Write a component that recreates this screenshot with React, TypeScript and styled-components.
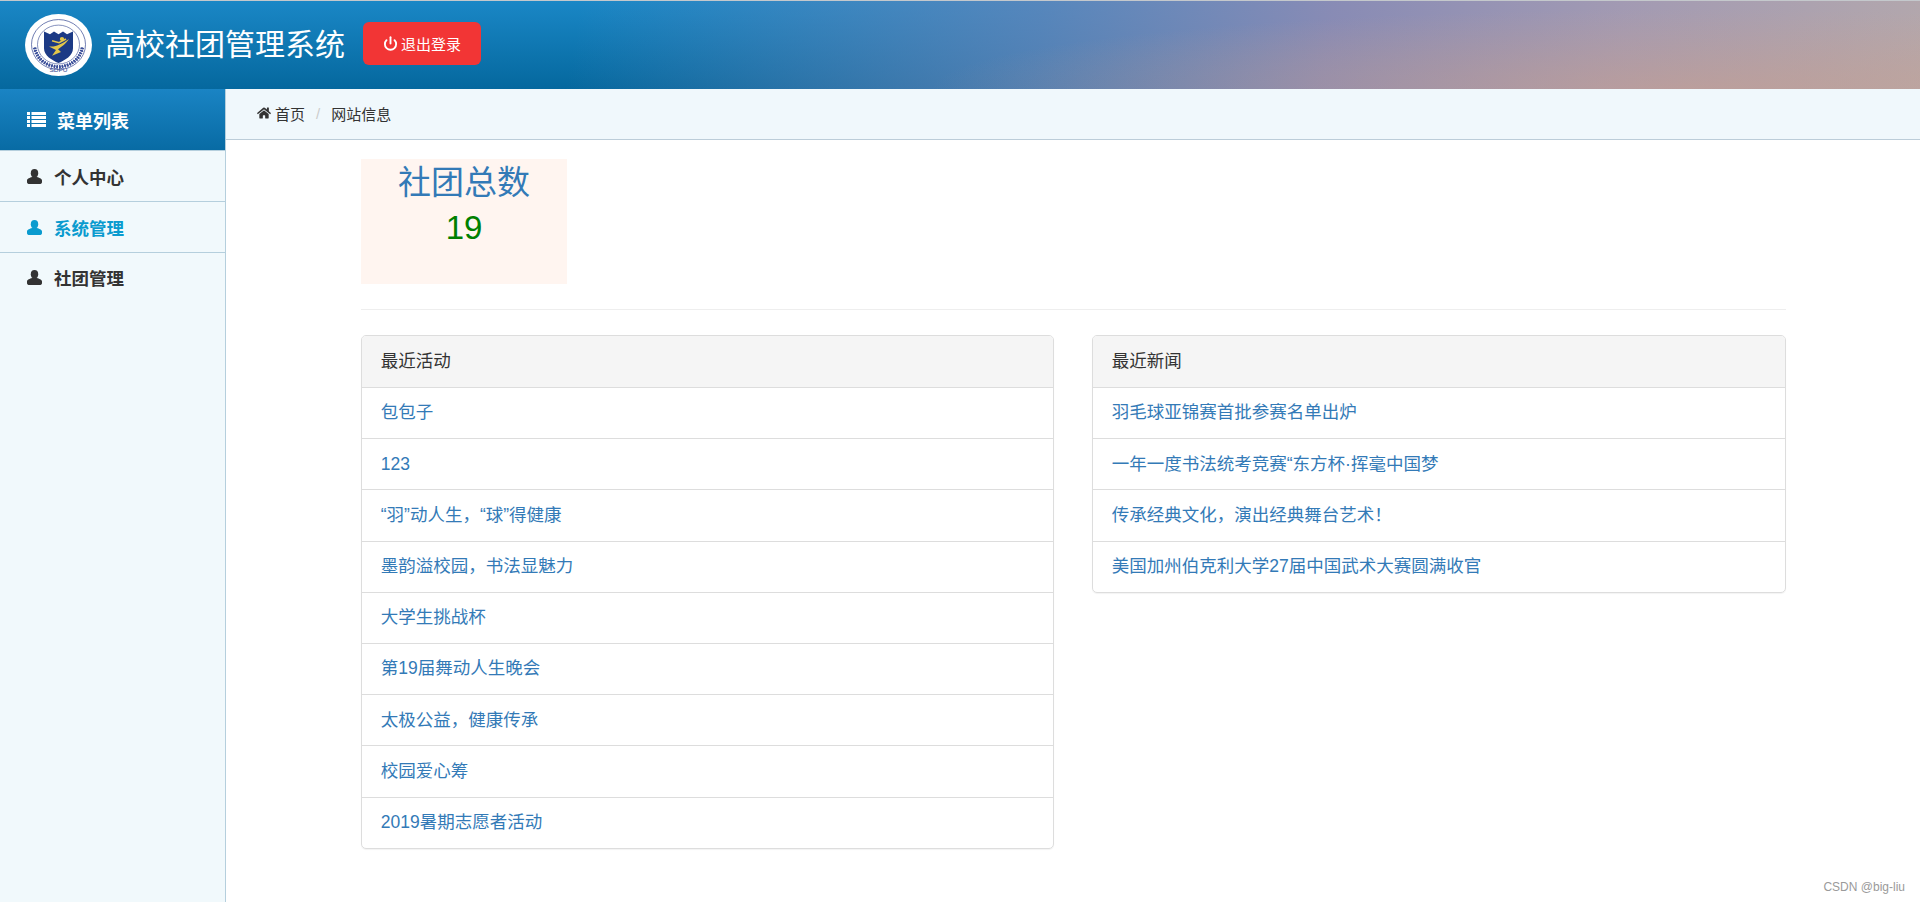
import styled, { createGlobalStyle } from "styled-components"
import { FaHome } from "react-icons/fa"
import { Power } from "lucide-react"

const GlobalStyle = createGlobalStyle`
    html, body {
        margin: 0;
        padding: 0;
        background: #fff;
        font-family: "Liberation Sans", "Noto Sans CJK SC", sans-serif;
        color: #333;
    }
    * {
        box-sizing: border-box;
    }
`

const Page = styled.div`
    height: 902px;
    display: flex;
    flex-direction: column;
    overflow: hidden;
`

const Header = styled.header`
    height: 89px;
    flex: none;
    display: flex;
    align-items: center;
    padding: 0 0 1px 25px;
    border-top: 1px solid #c4c8cc;
    background:
        radial-gradient(ellipse 760px 80px at 88% 100%, rgba(204, 160, 140, 0.55), rgba(204, 160, 140, 0)),
        linear-gradient(100deg, rgba(110, 140, 190, 0) 30%, rgba(110, 135, 185, 0.72) 54%, rgba(145, 140, 180, 0.93) 69%, rgba(168, 155, 178, 0.96) 84%, rgba(182, 168, 172, 0.98) 100%),
        linear-gradient(to bottom, #1a87c6, #05689e);
`

const Logo = styled.svg`
    width: 67px;
    height: 62px;
    flex: none;
    margin-top: 1px;
`

const Title = styled.h1`
    margin: 0 0 0 13px;
    font-size: 30px;
    font-weight: 400;
    line-height: 40px;
    color: #fff;
`

const LogoutButton = styled.button`
    margin: 0 0 2px 18px;
    width: 118px;
    height: 43px;
    display: flex;
    align-items: center;
    justify-content: center;
    gap: 3px;
    padding: 0;
    border: none;
    border-radius: 6px;
    background: #f23535;
    color: #fff;
    font-family: inherit;
    font-size: 15px;
`

const Body = styled.div`
    flex: 1;
    display: flex;
    min-height: 0;
`

const Sidebar = styled.aside`
    width: 226px;
    flex: none;
    background: #f1f9fc;
    border-right: 1px solid #b5cfdd;
`

const SidebarHead = styled.div`
    height: 62px;
    display: flex;
    align-items: center;
    gap: 11px;
    padding-left: 27px;
    background: linear-gradient(to bottom, #1a84c4, #086ba4);
    color: #fff;
    font-size: 18px;
    font-weight: 700;
    border-bottom: 1px solid #b5cfdd;
`

const MenuItem = styled.div<{ $active?: boolean }>`
    height: 51px;
    display: flex;
    align-items: center;
    gap: 12px;
    padding: 0 0 0 27px;
    font-size: 17.5px;
    font-weight: 700;
    color: ${(p) => (p.$active ? "#0a9bcf" : "#333")};
    border-bottom: 1px solid #b5cfdd;

    &:last-child {
        border-bottom: none;
        padding-bottom: 2px;
    }
`

const Main = styled.main`
    flex: 1;
    min-width: 0;
`

const Breadcrumb = styled.div`
    height: 51px;
    display: flex;
    align-items: center;
    padding: 0 0 2px 31px;
    background: #f0f8fc;
    border-bottom: 1px solid #bccdd9;
    font-size: 15px;
`

const Crumb = styled.span`
    display: flex;
    align-items: center;
    gap: 4px;
`

const CrumbDivider = styled.span`
    margin: 0 11px;
    color: #ccc;
`

const Content = styled.div`
    width: 1425px;
    margin: 19px 0 0 135px;
`

const StatBox = styled.div`
    width: 206px;
    height: 125px;
    padding-top: 2px;
    background: #fff5f0;
    text-align: center;
`

const StatTitle = styled.div`
    font-size: 33px;
    line-height: 44px;
    color: #337ab7;
`

const StatValue = styled.div`
    margin-top: 1px;
    font-size: 33px;
    line-height: 44px;
    color: #008000;
`

const Divider = styled.hr`
    margin: 25px 0 25px;
    border: none;
    border-top: 1px solid #eee;
`

const PanelGrid = styled.div`
    display: grid;
    grid-template-columns: 693px 1fr;
    column-gap: 38px;
    align-items: start;
`

const Panel = styled.section`
    border: 1px solid #ddd;
    border-radius: 5px;
    box-shadow: 0 1px 1px rgba(0, 0, 0, 0.05);
    overflow: hidden;
`

const PanelHead = styled.div`
    height: 52px;
    padding: 13px 18.75px;
    background: #f5f5f5;
    border-bottom: 1px solid #ddd;
    font-size: 17.5px;
    line-height: 25px;
`

const PanelRow = styled.a`
    display: block;
    height: 51.2px;
    padding: 12.5px 18.75px;
    border-bottom: 1px solid #ddd;
    font-size: 17.5px;
    line-height: 25px;
    color: #337ab7;
    text-decoration: none;

    &:first-of-type {
        padding-top: 11.5px;
    }

    &:last-child {
        height: 50px;
        border-bottom: none;
    }
`

const Watermark = styled.div`
    position: absolute;
    right: 15px;
    top: 879px;
    font-size: 12px;
    line-height: 16px;
    color: #9a9a9a;
`

const activities = [
    "包包子",
    "123",
    "“羽”动人生\uff0c“球”得健康",
    "墨韵溢校园\uff0c书法显魅力",
    "大学生挑战杯",
    "第19届舞动人生晚会",
    "太极公益\uff0c健康传承",
    "校园爱心筹",
    "2019暑期志愿者活动",
]

const news = [
    "羽毛球亚锦赛首批参赛名单出炉",
    "一年一度书法统考竞赛“东方杯·挥毫中国梦",
    "传承经典文化\uff0c演出经典舞台艺术\uff01",
    "美国加州伯克利大学27届中国武术大赛圆满收官",
]

const menu = ["个人中心", "系统管理", "社团管理"]

const wreathLeaves = Array.from({ length: 26 }, (_, i) => 100 + i * 6.4)

const SchoolLogo = () => (
    <Logo viewBox="0 0 67 67" preserveAspectRatio="none">
        <circle cx="33.5" cy="33.5" r="33.5" fill="#fff" />
        <circle cx="33.5" cy="33" r="27" fill="none" stroke="#2b3f8c" strokeWidth="0.7" />
        <circle cx="33.5" cy="33" r="21" fill="none" stroke="#2b3f8c" strokeWidth="0.6" />
        {wreathLeaves.map((a) => (
            <g key={a}>
                <ellipse cx="33.5" cy="9" rx="0.9" ry="1.8" fill="#3b4f99" transform={`rotate(${a} 33.5 33)`} />
                <ellipse cx="33.5" cy="9" rx="0.9" ry="1.8" fill="#3b4f99" transform={`rotate(${-a} 33.5 33)`} />
            </g>
        ))}
        <path
            d="M19 19 L25 22 L29 19 L33.5 22 L38 19 L42 22 L48 19 L48 37 C48 45 40 50 33.5 53 C27 50 19 45 19 37 Z"
            fill="#1c3a85"
        />
        <path d="M24 35 C31 36 37 32 44 27 C40 33 36 36 33 38 L36 41 L27 45 L31 39 Z" fill="#e3c64a" />
        <circle cx="37" cy="27" r="2.2" fill="#e3c64a" />
        <path d="M27 29 L34 31 L41 27" fill="none" stroke="#e3c64a" strokeWidth="1.6" />
        <text x="33.5" y="62.5" textAnchor="middle" fontSize="6.5" fill="#2b3f8c">
            SDPU
        </text>
    </Logo>
)

const ListIcon = () => (
    <svg width="19" height="15" viewBox="0 0 19 15" fill="currentColor">
        {[0, 4, 8, 12].map((y) => (
            <g key={y}>
                <rect x="0" y={y} width="3" height="3" />
                <rect x="4.5" y={y} width="14.5" height="3" />
            </g>
        ))}
    </svg>
)

const UserIcon = () => (
    <svg width="15" height="15" viewBox="0 0 15 15" fill="currentColor">
        <ellipse cx="7.5" cy="4.2" rx="3.7" ry="4.2" />
        <path d="M0 13 V11.5 C0 9.6 3 8.8 5 8 H10 C12 8.8 15 9.6 15 11.5 V13 C15 14.4 14 15 12.5 15 H2.5 C1 15 0 14.4 0 13 Z" />
    </svg>
)

const App = () => {
    return (
        <>
            <GlobalStyle />
            <Page>
                <Header>
                    <SchoolLogo />
                    <Title>高校社团管理系统</Title>
                    <LogoutButton>
                        <Power size={15} strokeWidth={3} />
                        退出登录
                    </LogoutButton>
                </Header>
                <Body>
                    <Sidebar>
                        <SidebarHead>
                            <ListIcon />
                            菜单列表
                        </SidebarHead>
                        {menu.map((item, i) => (
                            <MenuItem key={item} $active={i === 1}>
                                <UserIcon />
                                {item}
                            </MenuItem>
                        ))}
                    </Sidebar>
                    <Main>
                        <Breadcrumb>
                            <Crumb>
                                <FaHome size={14} />
                                首页
                            </Crumb>
                            <CrumbDivider>/</CrumbDivider>
                            <Crumb>网站信息</Crumb>
                        </Breadcrumb>
                        <Content>
                            <StatBox>
                                <StatTitle>社团总数</StatTitle>
                                <StatValue>19</StatValue>
                            </StatBox>
                            <Divider />
                            <PanelGrid>
                                <Panel>
                                    <PanelHead>最近活动</PanelHead>
                                    {activities.map((row) => (
                                        <PanelRow key={row}>{row}</PanelRow>
                                    ))}
                                </Panel>
                                <Panel>
                                    <PanelHead>最近新闻</PanelHead>
                                    {news.map((row) => (
                                        <PanelRow key={row}>{row}</PanelRow>
                                    ))}
                                </Panel>
                            </PanelGrid>
                        </Content>
                    </Main>
                </Body>
                <Watermark>CSDN @big-liu</Watermark>
            </Page>
        </>
    )
}

export default App
